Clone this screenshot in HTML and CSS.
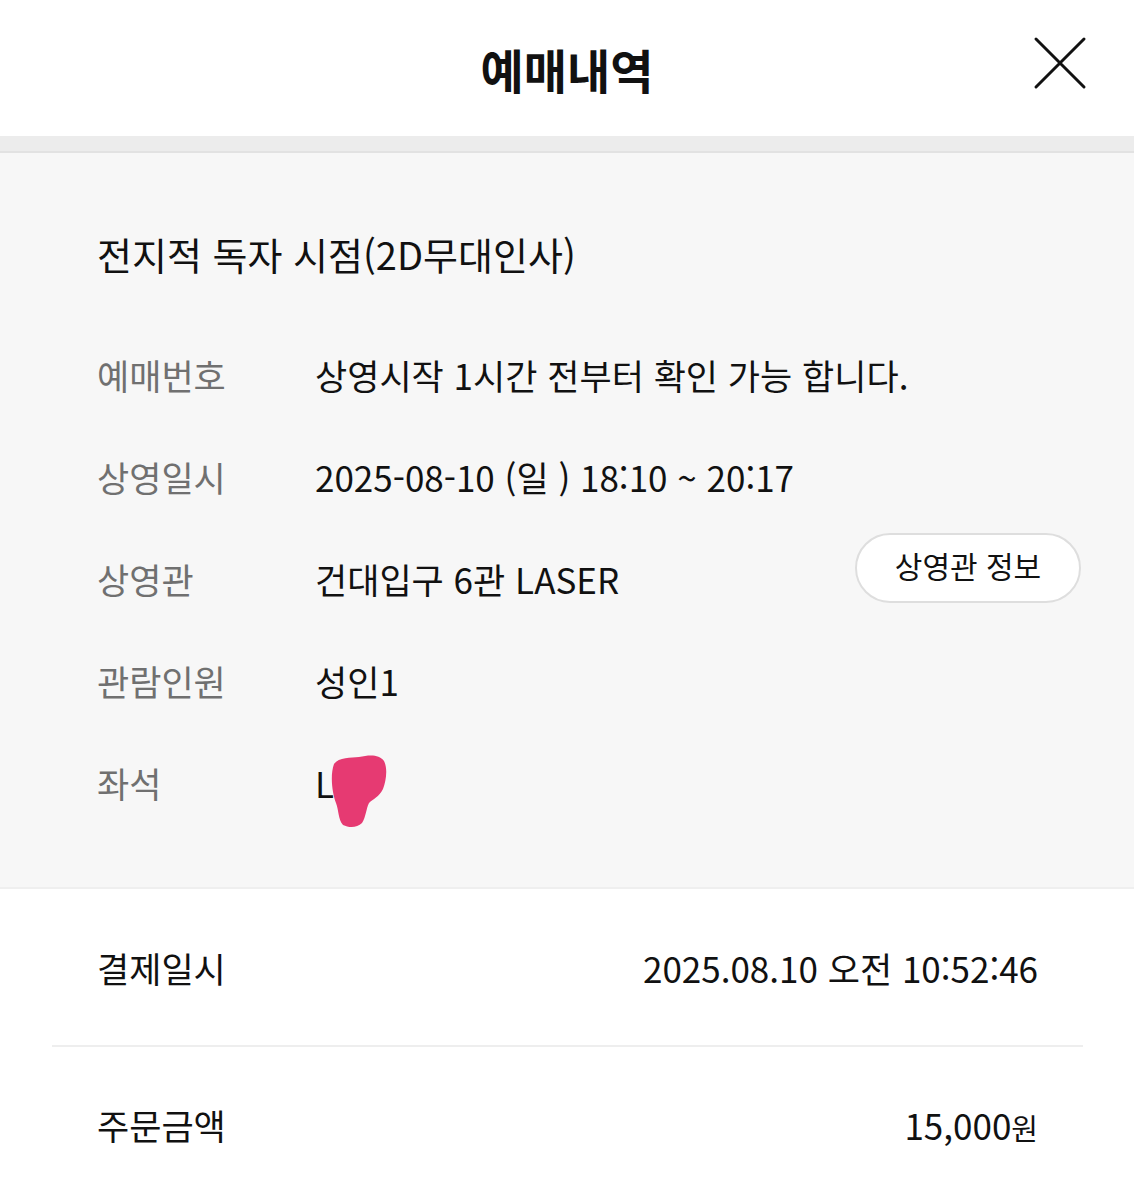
FILE: index.html
```html
<!DOCTYPE html>
<html lang="ko">
<head>
<meta charset="utf-8">
<title>예매내역</title>
<link rel="stylesheet" href="styles.css">
</head>
<body>
<header class="topbar">
  <span class="spacer"></span>
  <h1 class="topbar-title">예매내역</h1>
  <button class="close" aria-label="닫기">
    <svg width="54" height="54" viewBox="0 0 54 54"><path d="M3 3 L51 51 M51 3 L3 51" stroke="#111" stroke-width="3" stroke-linecap="round" fill="none"/></svg>
  </button>
</header>
<div class="strip"></div>
<section class="ticket">
  <h2 class="movie">전지적 독자 시점(2D무대인사)</h2>
  <div class="row"><span class="label">예매번호</span><span class="value">상영시작 1시간 전부터 확인 가능 합니다.</span></div>
  <div class="row"><span class="label">상영일시</span><span class="value">2025-08-10 (일 ) 18:10 ~ 20:17</span></div>
  <div class="row"><span class="label">상영관</span><span class="value">건대입구 6관 LASER</span><button class="theater-btn">상영관 정보</button></div>
  <div class="row"><span class="label">관람인원</span><span class="value">성인1</span></div>
  <div class="row"><span class="label">좌석</span><span class="value seat">L<svg class="blot" width="60" height="74" viewBox="0 0 60 74"><path d="M5 9 C10 2 22 3 30 2 C40 0 50 -1 55 6 C59 14 57 26 54 34 C50 42 44 44 40 48 C37 54 37 62 33 68 C28 73 20 73 14 70 C9 64 10 56 7 48 C3 38 1 20 5 9 Z" fill="#e63a72"/></svg></span></div>
</section>
<section class="pay">
  <div class="pay-row"><span class="pay-label">결제일시</span><span class="pay-value">2025.08.10 오전 10:52:46</span></div>
  <div class="pay-row"><span class="pay-label">주문금액</span><span class="pay-value">15,000<small class="won">원</small></span></div>
</section>
</body>
</html>
```
FILE: styles.css
```css
* { box-sizing: border-box; }
html, body { margin: 0; padding: 0; background: #fff; }
body {
  font-family: "Noto Sans CJK KR", "Noto Sans", sans-serif;
  color: #111;
  width: 1134px;
  overflow: hidden;
}
.topbar {
  height: 136px;
  display: grid;
  grid-template-columns: 1fr auto 1fr;
  align-items: center;
  background: #fff;
}
.topbar-title {
  margin: 0;
  font-size: 47px;
  font-weight: 700;
  letter-spacing: 0;
  line-height: 1;
  color: #111;
}
.close {
  justify-self: end;
  margin-right: 47px;
  margin-bottom: 10px;
  border: 0;
  background: none;
  padding: 0;
  width: 54px;
  height: 54px;
}
.close svg { display: block; }
.strip {
  height: 17px;
  background: #ececec;
  border-bottom: 2px solid #e2e2e2;
}
.ticket {
  background: #f7f7f7;
  padding: 76px 53px 54px 97px;
  border-bottom: 2px solid #efefef;
}
.movie {
  margin: 0 0 44px;
  font-size: 38px;
  font-weight: 400;
  line-height: 50px;
  letter-spacing: 0;
  color: #111;
}
.row {
  display: flex;
  align-items: center;
  height: 102px;
}
.label {
  width: 218px;
  flex: none;
  font-size: 35px;
  color: #707070;
}
.value {
  flex: 1;
  font-size: 35px;
  color: #111;
}
.seat { position: relative; }
.blot {
  position: absolute;
  left: 14px;
  top: -2px;
}
.theater-btn {
  flex: none;
  width: 226px;
  height: 70px;
  margin-bottom: 20px;
  border: 2px solid #dedede;
  border-radius: 35px;
  background: #fff;
  font-family: inherit;
  font-size: 30px;
  color: #111;
  padding: 0 0 6px;
}
.pay {
  padding: 0 51px 0 52px;
}
.pay-row {
  height: 156px;
  display: flex;
  align-items: center;
  justify-content: space-between;
  padding: 0 45px;
}
.pay-row + .pay-row { border-top: 2px solid #eeeeee; }
.pay-label {
  font-size: 35px;
  color: #111;
}
.pay-value {
  font-size: 35px;
  color: #111;
}
.won { font-size: 29px; }
```
